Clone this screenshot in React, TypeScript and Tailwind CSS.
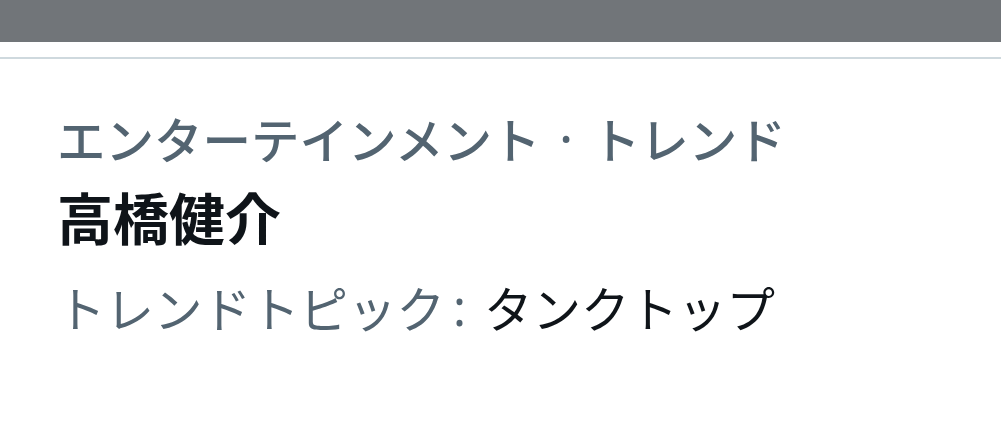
import React from 'react';

const font = { fontFamily: '"Noto Sans CJK JP", "Noto Sans", sans-serif' };

export default function App() {
    return (
        <div className="w-[1001px] h-[428px] bg-white flex flex-col overflow-hidden" style={font}>
            {/* dimmed header */}
            <div className="h-[42px] bg-[#717579] shrink-0"></div>
            <div className="h-[15px] shrink-0"></div>
            <div className="h-[2px] bg-[#cfd9de] shrink-0"></div>

            <div className="flex flex-col pl-[57px] pt-[49px]">
                <div className="flex items-center text-[48.5px] leading-[60px] font-medium text-[#536471] whitespace-nowrap">
                    <span>エンターテインメント</span>
                    <span className="mx-[19px] [font-family:'Noto_Sans',sans-serif]">·</span>
                    <span>トレンド</span>
                </div>
                <div className="mt-[10px] text-[56px] leading-[76px] font-bold text-[#0f1419] whitespace-nowrap">
                    高橋健介
                </div>
                <div className="mt-[15px] flex items-center text-[48.5px] leading-[76px] text-[#536471] whitespace-nowrap">
                    <span>トレンドトピック</span>
                    <span className="ml-[8px] mr-[18px] [font-family:'Noto_Sans',sans-serif]">:</span>
                    <span className="text-[#0f1419]">タンクトップ</span>
                </div>
            </div>
        </div>
    );
}
